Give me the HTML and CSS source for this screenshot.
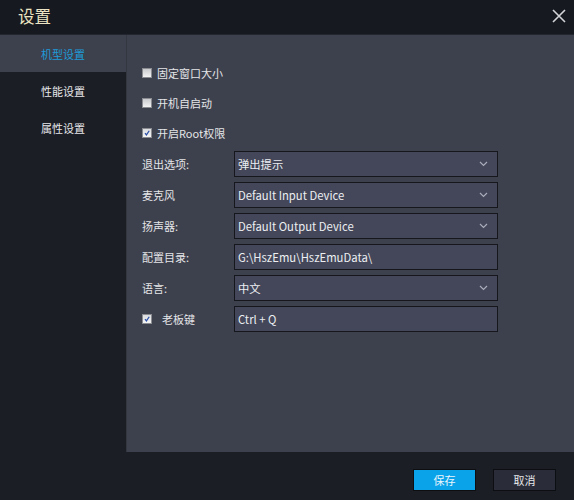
FILE: index.html
```html
<!DOCTYPE html>
<html lang="zh">
<head>
<meta charset="utf-8">
<title>设置</title>
<link rel="stylesheet" href="styles.css">
</head>
<body>
<div class="window">
  <div class="titlebar">
    <span class="title">设置</span>
    <svg class="close" width="14" height="14" viewBox="0 0 14 14"><path d="M1 1L13 13M13 1L1 13" stroke="#d2d4d8" stroke-width="1.6" fill="none"/></svg>
  </div>
  <div class="main">
    <div class="sidebar">
      <div class="nav-item active">机型设置</div>
      <div class="nav-item">性能设置</div>
      <div class="nav-item">属性设置</div>
    </div>
    <div class="content">
      <div class="check-row"><span class="cb"></span><span>固定窗口大小</span></div>
      <div class="check-row"><span class="cb"></span><span>开机自启动</span></div>
      <div class="check-row"><span class="cb checked"><svg width="10" height="10" viewBox="0 0 10 10"><path d="M2.5 5.2L4.3 7.4L7.8 2.2" stroke="#2c4fa8" stroke-width="1.5" fill="none"/></svg></span><span>开启Root权限</span></div>
      <div class="form">
        <div class="form-row"><span class="label">退出选项:</span><div class="box select"><span>弹出提示</span><svg class="chev" width="9" height="6" viewBox="0 0 9 6"><path d="M1 1L4.5 4.5L8 1" stroke="#a9adbb" stroke-width="1.2" fill="none"/></svg></div></div>
        <div class="form-row"><span class="label">麦克风</span><div class="box select"><span>Default Input Device</span><svg class="chev" width="9" height="6" viewBox="0 0 9 6"><path d="M1 1L4.5 4.5L8 1" stroke="#a9adbb" stroke-width="1.2" fill="none"/></svg></div></div>
        <div class="form-row"><span class="label">扬声器:</span><div class="box select"><span>Default Output Device</span><svg class="chev" width="9" height="6" viewBox="0 0 9 6"><path d="M1 1L4.5 4.5L8 1" stroke="#a9adbb" stroke-width="1.2" fill="none"/></svg></div></div>
        <div class="form-row"><span class="label">配置目录:</span><div class="box"><span>G:\HszEmu\HszEmuData\</span></div></div>
        <div class="form-row"><span class="label">语言:</span><div class="box select"><span>中文</span><svg class="chev" width="9" height="6" viewBox="0 0 9 6"><path d="M1 1L4.5 4.5L8 1" stroke="#a9adbb" stroke-width="1.2" fill="none"/></svg></div></div>
        <div class="form-row"><span class="label label-check"><span class="cb checked"><svg width="10" height="10" viewBox="0 0 10 10"><path d="M2.5 5.2L4.3 7.4L7.8 2.2" stroke="#2c4fa8" stroke-width="1.5" fill="none"/></svg></span><span>老板键</span></span><div class="box"><span>Ctrl + Q</span></div></div>
      </div>
    </div>
  </div>
  <div class="footer">
    <button class="btn primary">保存</button>
    <button class="btn">取消</button>
  </div>
</div>
</body>
</html>
```
FILE: styles.css
```css
* { box-sizing: border-box; }
html, body { margin: 0; padding: 0; }
body {
  background: #1c1e25;
  font-family: "Noto Sans CJK SC", "Noto Sans", sans-serif;
  font-size: 11px;
  color: #e4e5e8;
}
.window { width: 574px; height: 500px; display: flex; flex-direction: column; }
.titlebar {
  height: 35px;
  background: #161920;
  display: flex;
  align-items: center;
  justify-content: space-between;
  padding: 0 8px 0 18px;
  border-bottom: 1px solid #23262e;
}
.title { font-size: 16.5px; color: #ece4c2; line-height: 1; margin-top: -2px; }
.close { margin-top: -3px; }
.main { height: 417px; display: flex; }
.sidebar { width: 126px; background: #1c1e25; }
.nav-item {
  height: 37.5px;
  display: flex;
  align-items: center;
  justify-content: center;
  color: #e6e7ea;
  font-size: 11px;
}
.nav-item.active { background: #3d404d; color: #1d9bd8; height: 37px; }
.content {
  flex: 1;
  background: #3d404d;
  padding: 23px 0 0 15px;
  border-left: 1px solid #34373f;
}
.check-row { height: 30px; display: flex; align-items: center; gap: 5px; }
.cb {
  width: 10px; height: 10px;
  border: 1px solid #8a8c92;
  background: linear-gradient(#c9cacd, #f2f2f3);
  display: inline-flex;
  align-items: center;
  justify-content: center;
  flex: none;
}
.cb svg { display: block; }
.cb.checked { background: linear-gradient(#dcdde0, #f4f4f5); }
.form { margin-top: 3px; display: flex; flex-direction: column; gap: 5px; }
.form-row { display: flex; align-items: center; height: 26px; }
.label { width: 92px; flex: none; }
.label-check { display: flex; align-items: center; gap: 10px; }
.box {
  width: 264px;
  height: 26px;
  border: 1px solid #15171c;
  background: #434759;
  display: flex;
  align-items: center;
  justify-content: space-between;
  padding: 0 9px 0 3px;
  color: #eceef2;
  font-size: 11.3px;
}
.footer {
  height: 48px;
  display: flex;
  justify-content: flex-end;
  align-items: flex-start;
  padding: 17px 18px 0 0;
  gap: 17px;
}
.btn {
  width: 63px;
  height: 22px;
  border: 1px solid #0d0e12;
  background: #2a2d39;
  color: #e6e7ea;
  font-family: "Noto Sans CJK SC", "Noto Sans", sans-serif;
  font-size: 11px;
  padding: 0;
}
.btn.primary { background: #0aa2e8; color: #eaf6fd; }
```
